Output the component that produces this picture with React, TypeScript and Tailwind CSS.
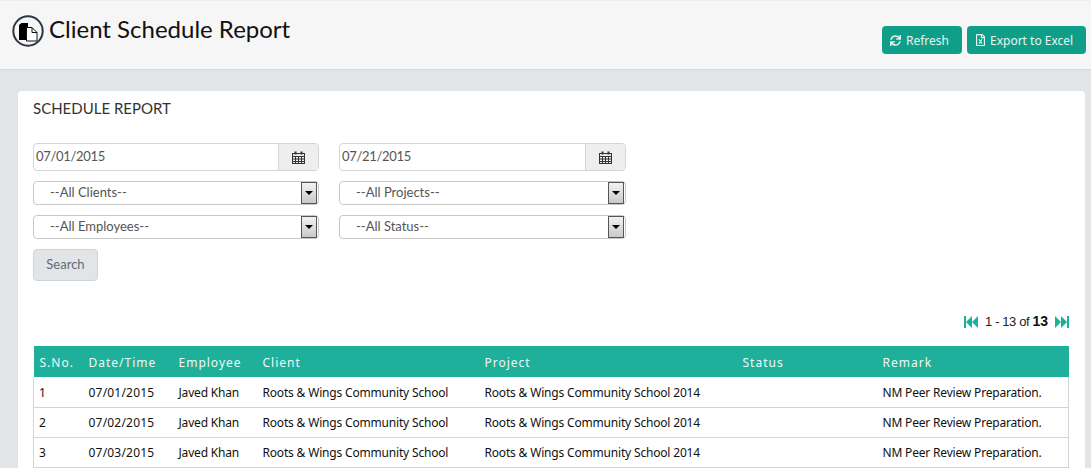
import { FaSync, FaRegFileExcel } from 'react-icons/fa'

const ROWS = [
  { no: 1, date: '07/01/2015' },
  { no: 2, date: '07/02/2015' },
  { no: 3, date: '07/03/2015' },
]

function TitleIcon() {
  return (
    <svg width="32" height="32" viewBox="0 0 32 32" className="shrink-0">
      <circle cx="16" cy="16" r="14.7" fill="#f6f6f7" stroke="#2c3542" strokeWidth="2" />
      <path d="M7 10 9.5 8H16v17H7z" fill="#000" />
      <path d="M14.5 12.5h5.5l5 5v8.5H14.5z" fill="#fff" stroke="#111" strokeWidth="1" />
      <path d="M20 12.5v5h5" fill="none" stroke="#111" strokeWidth="1" />
    </svg>
  )
}

function CalendarIcon() {
  return (
    <svg width="13" height="13" viewBox="0 0 13 13" fill="none" stroke="#333" strokeWidth="1">
      <rect x="0.5" y="2.5" width="12" height="10" />
      <path d="M0.5 5.5h12M0.5 8h12M0.5 10.5h12M3.5 5v8M6.5 5v8M9.5 5v8" />
      <path d="M3.5 0.5v3M9.5 0.5v3" strokeWidth="2" />
    </svg>
  )
}

function DateField({ value }: { value: string }) {
  return (
    <div className="flex h-[28px] overflow-hidden rounded border border-[#d5d5d5] bg-white text-[13px] tracking-[-0.3px] text-[#555]">
      <div className="flex-1 pl-[2px] leading-[24px]">{value}</div>
      <div className="flex w-[40px] items-center justify-center border-l border-[#d5d5d5] bg-[#eeeeee]">
        <CalendarIcon />
      </div>
    </div>
  )
}

function SelectField({ label }: { label: string }) {
  return (
    <div className="flex h-[24px] items-center justify-between rounded border border-[#c8c8c8] bg-white pl-[16px] text-[13px] text-[#555]">
      <span>{label}</span>
      <span className="mr-[1px] flex h-[22px] w-[16px] items-center justify-center border border-[#555] bg-gradient-to-b from-[#f2f2f2] to-[#c9c9c9]">
        <span className="h-0 w-0 border-x-[4px] border-t-[4px] border-x-transparent border-t-black" />
      </span>
    </div>
  )
}

function PagerIcon({ flip }: { flip?: boolean }) {
  return (
    <svg width="14" height="12" viewBox="0 0 14 12" className={flip ? 'rotate-180' : ''} fill="#1bb09a">
      <rect x="0" y="0" width="2" height="12" />
      <path d="M8 0v12L2 6zM14 0v12L8 6z" />
    </svg>
  )
}

export default function App() {
  return (
    <div className="h-[468px] w-[1091px] overflow-hidden bg-[#e2e5e8] font-['Lato',sans-serif]">
      <header className="flex h-[70px] items-start justify-between border-y border-t-[#eeeeee] border-b-[#d5d8db] bg-[#f6f6f7] pr-[5px]">
        <div className="flex items-center gap-[5px] pl-[12px] pt-[14px]">
          <TitleIcon />
          <h1 className="-mt-[4px] text-[24px] leading-[30px] text-[#111]">Client Schedule Report</h1>
        </div>
        <div className="flex gap-[5px] pt-[25px] font-['Noto_Sans',sans-serif] text-[12px] text-[#e6f5f2]">
          <button className="flex h-[28px] w-[80px] items-center gap-[5px] rounded bg-[#0f9f88] pl-[8px] pt-[2px]">
            <FaSync className="-mt-[2px] h-[11px] w-[11px]" />
            Refresh
          </button>
          <button className="flex h-[28px] w-[119px] items-center gap-[4px] rounded bg-[#0f9f88] pl-[8px] pt-[2px]">
            <FaRegFileExcel className="-mt-[2px] h-[12px] w-[11px]" />
            Export to Excel
          </button>
        </div>
      </header>

      <main className="ml-[18px] mt-[21px] h-[400px] w-[1067px] rounded-t bg-white px-[15px] pt-[8px]">
        <h2 className="text-[15px] leading-[18px] text-[#333]">SCHEDULE REPORT</h2>

        <div className="mt-[26px] grid w-[593px] grid-cols-[286px_287px] gap-x-[20px] gap-y-[10px]">
          <DateField value="07/01/2015" />
          <DateField value="07/21/2015" />
          <SelectField label="--All Clients--" />
          <SelectField label="--All Projects--" />
          <SelectField label="--All Employees--" />
          <SelectField label="--All Status--" />
        </div>

        <button className="mt-[10px] h-[32px] w-[65px] rounded border border-[#cfd3d7] bg-[#e2e5e8] text-[13px] text-[#5f6b76]">
          Search
        </button>

        <div className="mt-[30px] flex items-center justify-end gap-[7px] pr-[1px] font-['Liberation_Sans',sans-serif] text-[13px] tracking-[-0.4px] text-[#222]">
          <PagerIcon />
          <span>
            1 - 13 of <b className="text-[14px] tracking-normal text-[#111]">13</b>
          </span>
          <PagerIcon flip />
        </div>

        <table className="mt-[14px] w-[1035px] table-fixed border-collapse font-['Noto_Sans',sans-serif] text-[12px] tracking-[-0.18px] text-[#111]">
          <colgroup>
            <col className="w-[54px]" />
            <col className="w-[91px]" />
            <col className="w-[84px]" />
            <col className="w-[222px]" />
            <col className="w-[258px]" />
            <col className="w-[140px]" />
            <col className="w-[186px]" />
          </colgroup>
          <thead>
            <tr className="h-[31px] bg-[#1eb09a] text-left tracking-[1px] text-[#eef9f7]">
              {['S.No.', 'Date/Time', 'Employee', 'Client', 'Project', 'Status', 'Remark'].map((h, i) => (
                <th key={h} className={`pt-[2px] font-normal ${i === 0 ? 'pl-[6px]' : i === 1 ? 'pl-[1px]' : ''}`}>
                  {h}
                </th>
              ))}
            </tr>
          </thead>
          <tbody>
            {ROWS.map((r) => (
              <tr key={r.no} className="h-[30px] border border-t-0 border-[#d4d4d4] [&>td]:pt-[2px]">
                <td className="pl-[5px]">{r.no}</td>
                <td className="pl-[1px] tracking-[0.2px]">{r.date}</td>
                <td>Javed Khan</td>
                <td>Roots &amp; Wings Community School</td>
                <td>Roots &amp; Wings Community School 2014</td>
                <td></td>
                <td>NM Peer Review Preparation.</td>
              </tr>
            ))}
          </tbody>
        </table>
      </main>
    </div>
  )
}
